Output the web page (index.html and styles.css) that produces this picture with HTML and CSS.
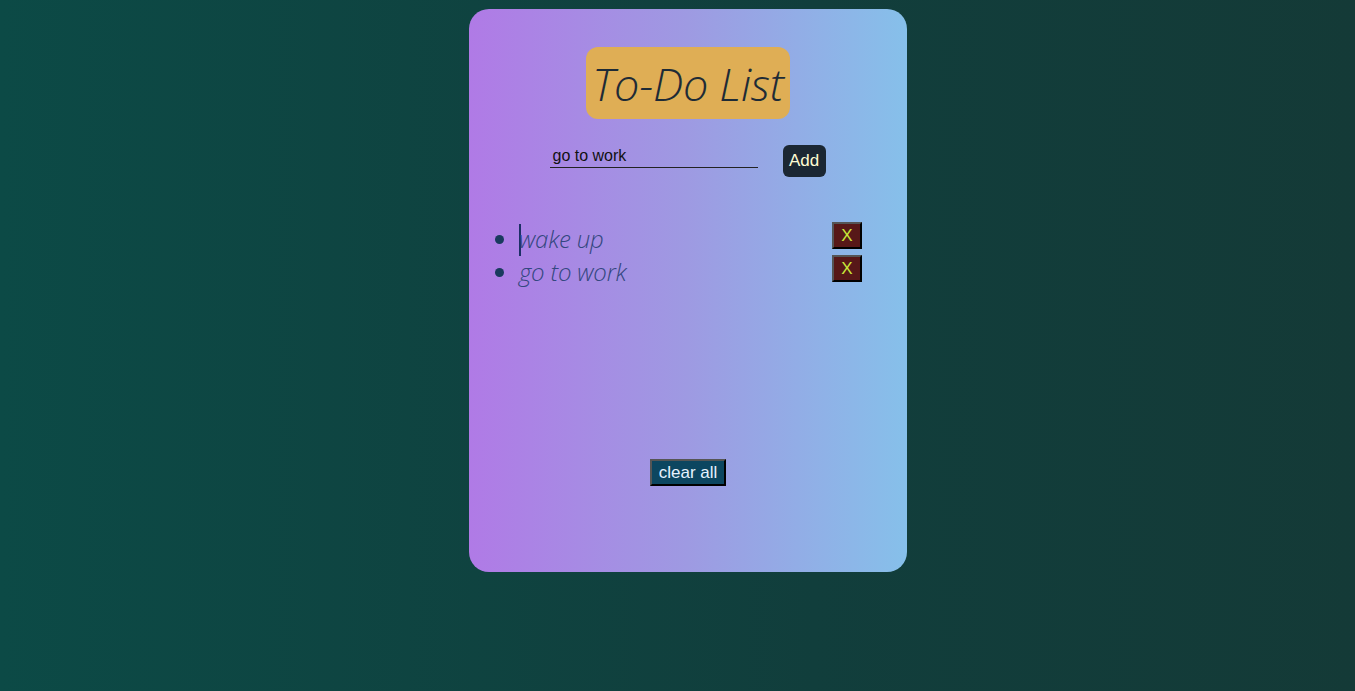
FILE: index.html
```html
<!DOCTYPE html>
<html>
<head>
<meta charset="utf-8">
<link rel="stylesheet" href="styles.css">
</head>
<body>
<div class="page">
  <div class="card">
    <h1 class="title">To-Do List</h1>
    <div class="entry">
      <div class="field">go to work</div>
      <button class="add">Add</button>
    </div>
    <ul class="list">
      <li class="item"><span class="text"><span class="caret"></span>wake up</span><button class="del">X</button></li>
      <li class="item"><span class="text">go to work</span><button class="del">X</button></li>
    </ul>
    <div class="footer"><button class="clear">clear all</button></div>
  </div>
</div>
</body>
</html>
```
FILE: styles.css
```css
html, body {
  margin: 0;
  height: 100%;
}
body {
  background: linear-gradient(90deg, #0c4a46 0%, #113e3c 60%, #143a37 100%);
  font-family: "Liberation Sans", Arial, sans-serif;
}
.page {
  display: flex;
  justify-content: center;
  padding: 9px 0 0 21px;
}
.card {
  width: 438px;
  height: 563px;
  box-sizing: border-box;
  border-radius: 20px;
  background: linear-gradient(90deg, #b07ae6 0%, #9e9ae2 50%, #86c0ea 100%);
  display: flex;
  flex-direction: column;
  align-items: center;
  padding-top: 38px;
}
.title {
  margin: 0;
  width: 204px;
  height: 72px;
  box-sizing: border-box;
  background: #dfae55;
  border-radius: 12px;
  font-family: "Open Sans", sans-serif;
  font-weight: 300;
  font-style: italic;
  font-size: 45px;
  color: #1e2b36;
  display: flex;
  align-items: center;
  justify-content: center;
  letter-spacing: -0.3px;
  padding-top: 1px;
}
.entry {
  display: flex;
  align-items: flex-start;
  margin-top: 26px;
  margin-left: -1px;
  gap: 25px;
}
.field {
  width: 208px;
  box-sizing: border-box;
  border-bottom: 1px solid #222;
  font-size: 16px;
  color: #111;
  padding: 1px 0 2px 3px;
  margin-top: 1px;
  line-height: 18px;
}
.add {
  width: 43px;
  height: 32px;
  border: none;
  border-radius: 6px;
  background: #1b2733;
  color: #fdfbd2;
  font-family: "Liberation Sans", Arial, sans-serif;
  font-size: 17px;
  padding: 0;
}
.list {
  align-self: stretch;
  margin: 45px 0 0 0;
  padding: 0 45px 0 50px;
  color: #193a5e;
}
.item {
  font-family: "Open Sans", sans-serif;
  font-weight: 300;
  font-style: italic;
  font-size: 24px;
  line-height: 33px;
  height: 33px;
  position: relative;
}
.text {
  color: #33477f;
  letter-spacing: -0.2px;
  position: relative;
}
.caret {
  display: inline-block;
  width: 2px;
  height: 32px;
  background: #1d2f66;
  vertical-align: -8px;
  margin-right: -2px;
}
.del {
  position: absolute;
  right: 0;
  top: 0;
  width: 30px;
  height: 27px;
  background: #571818;
  color: #c9e83a;
  border: 2px outset #555;
  font-family: "Liberation Sans", Arial, sans-serif;
  font-size: 17px;
  font-style: normal;
  padding: 0;
  line-height: 20px;
}
.footer {
  margin-top: 171px;
  display: flex;
  justify-content: center;
}
.clear {
  width: 76px;
  height: 27px;
  background: #0c4660;
  color: #e6f2ff;
  border: 2px outset #555;
  font-family: "Liberation Sans", Arial, sans-serif;
  font-size: 17px;
  padding: 0;
}
```
